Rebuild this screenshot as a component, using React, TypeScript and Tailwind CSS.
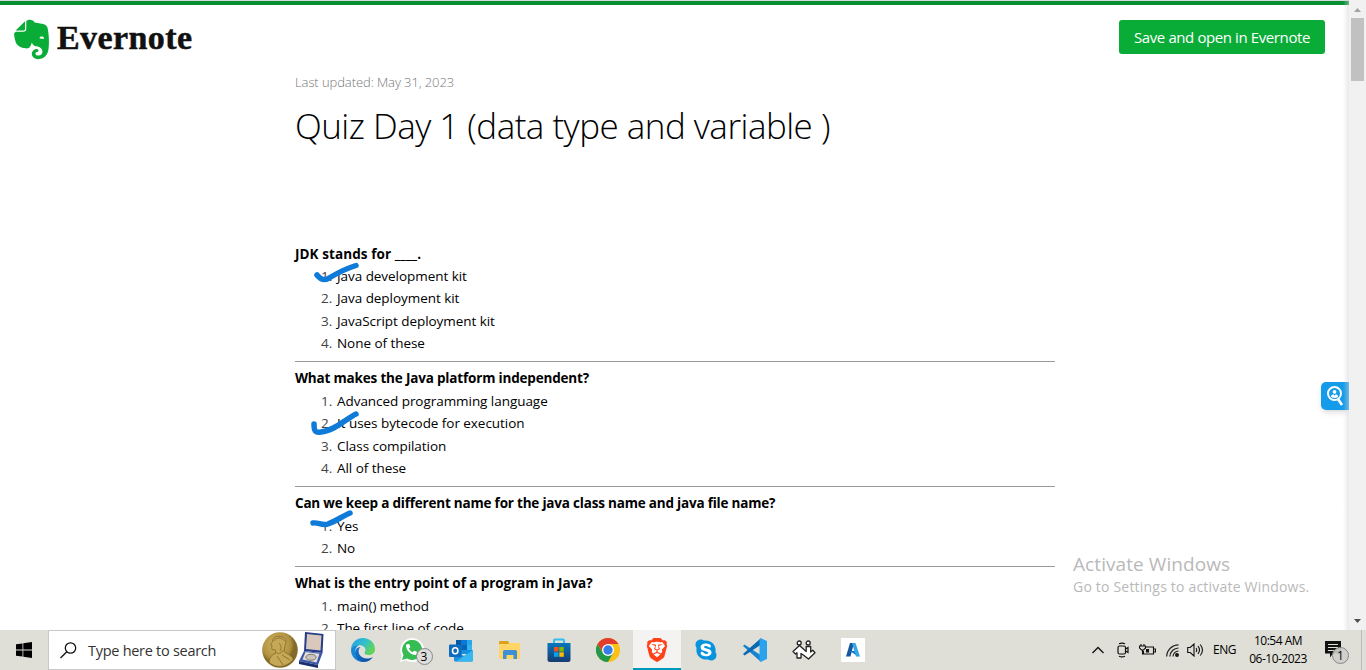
import type { ReactNode } from "react";
import { FaEvernote, FaPhoneAlt, FaSkype } from "react-icons/fa";
import { SiBrave } from "react-icons/si";

type Question = { title: string; spacing: string; options: string[]; mark?: ReactNode };

const inkProps = {
  fill: "none",
  stroke: "#0f7bd8",
  strokeWidth: 5.5,
  strokeLinecap: "round" as const,
  strokeLinejoin: "round" as const,
};

const questions: Question[] = [
  {
    title: "JDK stands for ____.",
    spacing: "tracking-[0.08px]",
    options: ["Java development kit", "Java deployment kit", "JavaScript deployment kit", "None of these"],
    mark: (
      <svg className="absolute left-[17px] top-[18px]" width="50" height="24" {...inkProps}>
        <path d="M5 14C9 19 13 20 18 16.500C27 11 36 7 44 4.500" />
      </svg>
    ),
  },
  {
    title: "What makes the Java platform independent?",
    spacing: "tracking-[-0.18px]",
    options: ["Advanced programming language", "It uses bytecode for execution", "Class compilation", "All of these"],
    mark: (
      <svg className="absolute left-[14px] top-[41px]" width="54" height="30" {...inkProps}>
        <path d="M5 16C5 24 7 25 12 24C26 23 38 10 47 6" />
      </svg>
    ),
  },
  {
    title: "Can we keep a different name for the java class name and java file name?",
    spacing: "tracking-[-0.2px]",
    options: ["Yes", "No"],
    mark: (
      <svg className="absolute left-[12px] top-[16px]" width="54" height="24" {...inkProps}>
        <path d="M6 15C11 14 15 18 21 16C29 13 36 8 43 5" />
      </svg>
    ),
  },
  {
    title: "What is the entry point of a program in Java?",
    spacing: "tracking-[-0.08px]",
    options: ["main() method", "The first line of code"],
  },
];

function QuestionBlock({ q, last }: { q: Question; last: boolean }) {
  return (
    <section className="relative text-[13.5px] leading-[22.4px] text-black">
      <h2 className={`whitespace-nowrap font-bold ${q.spacing}`}>{q.title}</h2>
      <ol>
        {q.options.map((o, i) => (
          <li key={o} className="flex whitespace-nowrap pl-[26px] tracking-[-0.05px]">
            <span className="w-4 text-[#444]">{i + 1}.</span>
            <span>{o}</span>
          </li>
        ))}
      </ol>
      {q.mark}
      {!last && <hr className="mt-[6.4px] mb-[5.4px] border-t border-[#999]" />}
    </section>
  );
}

function Taskicon({ children, active = false }: { children: ReactNode; active?: boolean }) {
  return (
    <div
      className={`flex h-full w-12 shrink-0 items-center justify-center ${
        active ? "border-b-2 border-[#0099bc] bg-[#f4f3f1] pt-[2px]" : ""
      }`}
    >
      {children}
    </div>
  );
}

function Edge() {
  return (
    <svg width="24" height="24" viewBox="0 0 24 24">
      <defs>
        <linearGradient id="edgeTop" x1="0" x2="1" y1="0" y2=".5">
          <stop offset="0" stopColor="#1f9fdf" />
          <stop offset=".55" stopColor="#32bfd0" />
          <stop offset="1" stopColor="#62d455" />
        </linearGradient>
        <linearGradient id="edgeLow" x1="0" x2="1" y1="0" y2="1">
          <stop offset="0" stopColor="#0d7ed2" />
          <stop offset="1" stopColor="#1148a0" />
        </linearGradient>
      </defs>
      <path d="M0 12C0 5 5 0 12 0s12 5 12 11c0 4-3 6-6.500 6-2.500 0-4-1-4-2 0-.8 1-1.300 1-3 0-2.500-2.500-4.700-6-4.700C4 7.300 1 9 0 12z" fill="url(#edgeTop)" />
      <path d="M0 12c.5-3 4-5 8-4.700-3 1.500-4 4-4 6.700 0 5 4 9.500 9 9.900C6 24.500 0 19 0 12z" fill="#1487d6" />
      <path d="M9.500 9c-2 2-2.500 4.500-1.200 7.300 2 4 8 5.700 13.700 2.700-2 3-5.500 5-9.500 5C7 23.700 3.800 19 4 14.500 4.200 11 6.500 9.200 9.500 9z" fill="url(#edgeLow)" />
    </svg>
  );
}

function Outlook() {
  return (
    <svg width="24" height="23" viewBox="0 0 24 23">
      <path d="M7 1h16v14H7z" fill="#1490df" />
      <path d="M7 1h5.500v5H7z" fill="#0358a7" />
      <path d="M12.500 1H18v5h-5.500z" fill="#0a78d4" />
      <path d="M18 1h5v5h-5z" fill="#28a8ea" />
      <path d="M12.500 6H18v5h-5.500z" fill="#0364b8" />
      <path d="M18 6h5v5h-5z" fill="#32b5ee" />
      <path d="M5 11l10 6 9-6v10a1.500 1.500 0 0 1-1.500 1.500h-16A1.500 1.500 0 0 1 5 21z" fill="#1a8fdc" />
      <path d="M24 11L7 22.500h15.500A1.500 1.500 0 0 0 24 21z" fill="#37b7f0" />
      <rect y="5.500" width="12.500" height="12.500" rx="1" fill="#0f6cbd" />
      <ellipse cx="6.200" cy="11.800" rx="2.700" ry="3" fill="none" stroke="#fff" strokeWidth="1.600" />
    </svg>
  );
}

function Explorer() {
  return (
    <svg width="22" height="20" viewBox="0 0 22 20">
      <path d="M0 1.500Q0 1 1 1h8l1 2h11v4H0z" fill="#dba11c" />
      <path d="M0 4h9l1.500-1H21v16H0z" fill="#ffd666" />
      <path d="M4 19v-7.500Q4 10 5.500 10h11q1.500 0 1.500 1.500V19h-3.500v-4h-7v4z" fill="#3d8fd6" />
    </svg>
  );
}

function Store() {
  return (
    <svg width="24" height="25" viewBox="0 0 24 25">
      <defs>
        <linearGradient id="bag" x2="0" y2="1">
          <stop stopColor="#0877bd" />
          <stop offset="1" stopColor="#173c70" />
        </linearGradient>
      </defs>
      <path d="M7 6V2.500Q7 1.500 8 1.500h8q1 0 1 1V6" fill="none" stroke="#31bdf0" strokeWidth="2" />
      <path d="M.5 5h23v16.500Q23.500 24 21 24H3Q.5 24 .5 21.500z" fill="url(#bag)" />
      <path d="M7 9h4.500v4.500H7z" fill="#f25022" />
      <path d="M12.300 9h4.500v4.500h-4.500z" fill="#7fba00" />
      <path d="M7 14.300h4.500v4.500H7z" fill="#00a4ef" />
      <path d="M12.300 14.300h4.500v4.500h-4.500z" fill="#ffb900" />
    </svg>
  );
}

function Chrome() {
  return (
    <svg width="24" height="24" viewBox="0 0 24 24">
      <circle cx="12" cy="12" r="12" fill="#fbc116" />
      <path d="M1.600 6A12 12 0 0 1 22.400 6H12L7 15z" fill="#e33b2e" />
      <path d="M1.600 6A12 12 0 0 0 12 24l5.200-9H6.800z" fill="#229a4c" />
      <circle cx="12" cy="12" r="6" fill="#fff" />
      <circle cx="12" cy="12" r="4.700" fill="#337ee8" />
    </svg>
  );
}

function Code() {
  return (
    <svg width="24" height="24" viewBox="0 0 24 24">
      <path d="M1.500 6.500L0 8l17.500 15.500V17z" fill="#1684ce" />
      <path d="M1.500 17.500L0 16 17.500.5V7z" fill="#0769b4" />
      <path d="M17.500 0L24 3v18l-6.500 3-1-1.500v-21z" fill="#2aa3ec" />
    </svg>
  );
}

function People() {
  return (
    <svg width="24" height="20" viewBox="0 0 24 20" fill="#fff" stroke="#222" strokeWidth="1.300" strokeLinejoin="round">
      <path d="M7.500 5.500L1 11.500l2.500 2.500 1.500-1.200V18h4v-4.500l3 2 4.500 3.500 6.500-6.300-2.300-2.400-2 1.700V6.500h-4.500v5L12 9.500z" />
      <circle cx="7.200" cy="3" r="2" />
      <circle cx="16.200" cy="3" r="2" />
    </svg>
  );
}

function Medal() {
  return (
    <svg width="65" height="38" viewBox="0 0 65 38">
      <defs>
        <radialGradient id="gold" cx=".4" cy=".35">
          <stop stopColor="#d3b968" />
          <stop offset=".8" stopColor="#b0913f" />
          <stop offset="1" stopColor="#85692a" />
        </radialGradient>
      </defs>
      <circle cx="18" cy="19" r="17.800" fill="url(#gold)" />
      <path d="M7 31c1-6 4-8 7-9l-.5-3-3.500-.5-.5-2 .8-1.500-1.800-1 2-3.500c0-4 4-6 8-5 5 0 6.500 5 4.500 9l-1 6c4 3 8 4 9 8-5 7-17 10-24 2.500z" fill="#c5a956" stroke="#866a2b" strokeWidth=".8" />
      <path d="M11.500 10c2-3.500 8-4.500 11 0M17 12c2 2 3 5 1 8M14.500 22c3 1 5 0 7-3M15 25l6 9M20 24l8 5" fill="none" stroke="#8a6f30" strokeWidth=".9" />
      <path d="M43 1l18.500 2-1 19L42 20z" fill="#263d88" />
      <path d="M45 3l14.500 1.500-1 15L44 18z" fill="#dac8bd" />
      <path d="M42 20l18.500 2L56 34l-19-4z" fill="#3b57aa" />
      <path d="M43.500 21l14 1.700-3 8.800-14-3z" fill="#e5dfd7" />
      <path d="M37 30l19 4v3l-19-4z" fill="#1b2e70" />
      <ellipse cx="49" cy="26.300" rx="5.200" ry="3" fill="#c8c3bc" stroke="#81796f" />
    </svg>
  );
}

export default function App() {
  return (
    <div className="flex h-[670px] w-[1366px] flex-col overflow-hidden bg-white font-['Open_Sans','Noto_Sans',sans-serif] text-black">
      <div className="flex h-[630px] shrink-0">
        <main className="relative h-full w-[1349px] overflow-hidden">
          <div className="h-[5px] border-t border-[#d5dbdc] bg-[#078f31]" />
          <header className="flex h-[65px] justify-between pl-[14px] pr-6 pt-[15px]">
            <div className="flex">
              <FaEvernote className="-mt-[3px] h-[45px] w-[35px] text-[#0aac38]" preserveAspectRatio="none" />
              <span className="ml-2 h-9 whitespace-nowrap font-['Liberation_Serif',serif] text-[34px] leading-[35px] font-bold tracking-[0.4px] text-[#111] [-webkit-text-stroke:0.5px_#111]">
                Evernote
              </span>
            </div>
            <button className="h-[34px] w-[206px] rounded-[3px] bg-[#0aac38] text-[15px] leading-[34px] tracking-[-0.4px] whitespace-nowrap text-white">
              Save and open in Evernote
            </button>
          </header>

          <article className="ml-[295px] w-[760px]">
            <p className="pt-px text-[13px] leading-[22px] font-light tracking-[-0.08px] whitespace-nowrap text-[#777]">
              Last updated: May 31, 2023
            </p>
            <h1 className="mt-[8px] h-[50px] text-[35px] leading-[50px] font-light tracking-[-0.52px] whitespace-nowrap">
              Quiz Day 1 (data type and variable )
            </h1>
            <div className="mt-[91.6px]">
              {questions.map((q, i) => (
                <QuestionBlock key={q.title} q={q} last={i === questions.length - 1} />
              ))}
            </div>
          </article>

          <div className="absolute top-[382px] right-0 flex h-7 w-7 items-center justify-center rounded-l-[5px] bg-[#149bea] shadow-md">
            <svg width="18" height="22" viewBox="0 0 18 22">
              <circle cx="8.500" cy="8.500" r="6.500" fill="none" stroke="#fff" strokeWidth="2" />
              <path d="M12 14l4 6" stroke="#fff" strokeWidth="2.600" />
              <circle cx="8.500" cy="6.800" r="1.900" fill="#fff" />
              <path d="M4.800 11.800q.5-2.600 2.400-2.600l1.300 1.200 1.300-1.200q2 0 2.400 2.600-3.500 2.400-7.400 0z" fill="#fff" />
            </svg>
          </div>

          <div className="absolute top-[551px] left-[1073px] whitespace-nowrap text-[#b9b9b9]">
            <div className="text-[19px] leading-[26px] tracking-[0.08px]">Activate Windows</div>
            <div className="text-[14px] leading-[19px] tracking-[0.2px]">Go to Settings to activate Windows.</div>
          </div>

          <div className="absolute inset-y-0 right-0 w-[6px] bg-linear-to-r from-transparent to-[#cfd3da]/50" />
        </main>

        <div className="flex w-[17px] flex-col items-center bg-[#f1f1f1]">
          <svg width="17" height="18" viewBox="0 0 17 18"><path d="M5 12l3.500-4 3.500 4z" fill="#a3a3a3" /></svg>
          <div className="h-[63px] w-[13px] bg-[#c1c1c1]" />
          <svg className="mt-auto" width="17" height="17" viewBox="0 0 17 17"><path d="M5 6h7l-3.500 4z" fill="#505050" /></svg>
        </div>
      </div>

      <footer className="flex h-10 shrink-0 bg-[#dfded7]">
        <div className="flex w-12 items-center justify-center">
          <svg width="16" height="16" viewBox="0 0 16 16">
            <path d="M0 2.300l6.500-.9v6.100H0zM7.300 1.200L16 0v7.500H7.300zM0 8.400h6.500v6.200L0 13.700zM7.300 8.400H16V16l-8.700-1.200z" />
          </svg>
        </div>
        <div className="flex w-[288px] items-center border border-[#c8c8c8] bg-white pl-[11px]">
          <svg width="17" height="17" viewBox="0 0 17 17" fill="none" stroke="#111" strokeWidth="1.300">
            <circle cx="10.500" cy="6" r="5.200" /><path d="M6.800 9.700L.5 16" />
          </svg>
          <span className="ml-[11px] w-[174px] pt-px text-[14.5px] tracking-[-0.28px] whitespace-nowrap text-[#333]">Type here to search</span>
          <Medal />
        </div>

        <nav className="ml-[2.5px] flex gap-px">
          <Taskicon><Edge /></Taskicon>
          <Taskicon>
            <div className="relative h-6 w-6">
              <svg className="h-6 w-6" viewBox="0 0 24 24"><path d="M0 24l1.800-6A12 12 0 1 1 6 22.300z" fill="#fff" /><path d="M2 22l1.500-5A10 10 0 1 1 7 20.500z" fill="#35bd54" /></svg>
              <FaPhoneAlt className="absolute top-[6px] left-[6px] text-[11px] text-white" />
              <span className="absolute top-[10px] left-4 h-[17px] w-[17px] rounded-full border border-[#888] bg-[#dddddb] text-center text-[12px] leading-[15px]">3</span>
            </div>
          </Taskicon>
          <Taskicon><Outlook /></Taskicon>
          <Taskicon><Explorer /></Taskicon>
          <Taskicon><Store /></Taskicon>
          <Taskicon><Chrome /></Taskicon>
          <Taskicon active>
            <div className="relative flex h-6 w-6 items-center justify-center">
              <svg className="absolute" width="24" height="24" viewBox="0 0 24 24"><path d="M5 4h14l2 5-3 10-6 4-6-4L3 9z" fill="#fff" /></svg>
              <SiBrave className="relative text-[24px] text-[#ff421c]" />
            </div>
          </Taskicon>
          <Taskicon>
            <div className="relative h-6 w-6">
              <svg className="absolute" width="24" height="24" viewBox="0 0 24 24"><circle cx="12" cy="12" r="9" fill="#fff" /></svg>
              <FaSkype className="absolute text-[24px] text-[#0893df]" />
            </div>
          </Taskicon>
          <Taskicon><Code /></Taskicon>
          <Taskicon><People /></Taskicon>
          <Taskicon>
            <svg width="24" height="24" viewBox="0 0 24 24">
              <path d="M0 0h24v24H0z" fill="#fff" />
              <path d="M9 5h4L9.500 18.500H5z" fill="#14599f" />
              <path d="M9 13h6l2 5.500z" fill="#0c77c9" />
              <path d="M11 5h3.500L19 18.500h-4z" fill="#35a6e6" />
            </svg>
          </Taskicon>
        </nav>

        <div className="ml-auto flex items-center text-[12px] whitespace-nowrap">
          <svg className="mr-[13px]" width="12" height="8" viewBox="0 0 12 8" fill="none" stroke="#111" strokeWidth="1.300"><path d="M.5 7L6 1.500 11.500 7" /></svg>
          <svg className="mr-[10px]" width="12" height="16" viewBox="0 0 12 16" fill="none" stroke="#111" strokeWidth="1.200">
            <rect x="1" y="4" width="7.500" height="8" rx="1.500" /><path d="M8.500 7l2.500-1.500v5L8.500 9M2 1.800q3-1.500 6 0M2 14.200q3 1.500 6 0" />
          </svg>
          <svg className="mr-[10px]" width="17" height="12" viewBox="0 0 17 12" fill="none" stroke="#111" strokeWidth="1.100">
            <path d="M7 3h7.500v7H4.500V7M15 5h1.500v3H15M2 0v2M5 0v2M.5 2h6v2L4.500 6h-2l-2-2zM3.500 6v4h1" /><path d="M7.500 5.500h2v2.500h-2z" fill="#111" />
          </svg>
          <svg className="mr-2" width="13" height="13" viewBox="0 0 13 13" fill="none" stroke="#222" strokeWidth="1.200">
            <path d="M.7 12.500A12 12 0 0 1 12.500.8M3.900 12.500A8.800 8.800 0 0 1 12.500 4M7 12.500A5.700 5.700 0 0 1 12.500 7" /><circle cx="11" cy="11" r="1.400" fill="#111" />
          </svg>
          <svg className="mr-[9px]" width="17" height="14" viewBox="0 0 17 14" fill="none" stroke="#111" strokeWidth="1.100">
            <path d="M.7 4.500h2.500L7 1v12L3.200 9.500H.7zM9 5q1.500 2 0 4M11 3.200q3 3.800 0 7.600M13.200 1.500q4.600 5.500 0 11" />
          </svg>
          <span className="w-[23px] tracking-[-0.5px]">ENG</span>
          <div className="ml-3 flex w-[60px] flex-col items-center leading-[18px] tracking-[-0.5px]">
            <span>10:54 AM</span>
            <span>06-10-2023</span>
          </div>
          <div className="relative ml-4 h-5 w-[37px]">
            <svg width="18" height="18" viewBox="0 0 18 18"><path d="M1 1h16v12.500H9l-3 4v-4H1z" fill="#111" /><path d="M4 4.500h10M4 7.500h10M4 10.500h6" stroke="#dfded7" strokeWidth="1" /></svg>
            <span className="absolute top-[7px] left-[8px] h-[17px] w-[17px] rounded-full border border-[#888] bg-[#cfcfcb]/90 text-center text-[12px] leading-[15px]">1</span>
          </div>
          <div className="h-10 w-[5px] border-l border-[#bcbcb8]" />
        </div>
      </footer>
    </div>
  );
}
